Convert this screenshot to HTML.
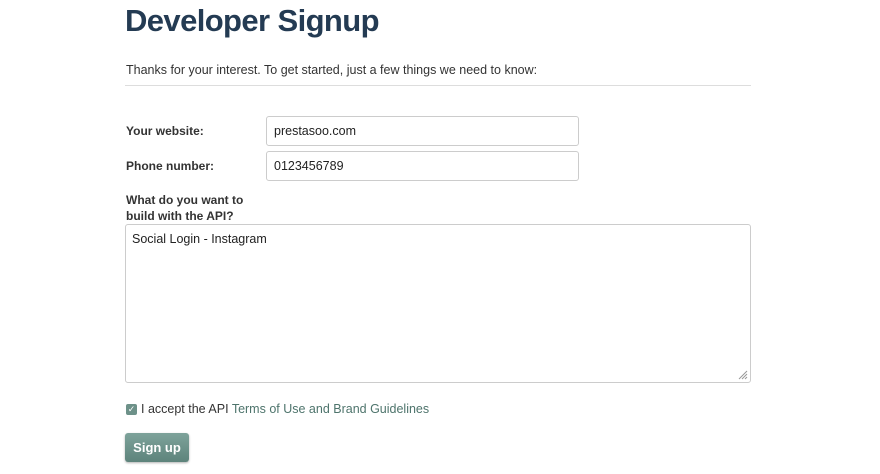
<!DOCTYPE html>
<html><head><style>
body{margin:0;width:880px;height:474px;background:#fff;font-family:"Liberation Sans",sans-serif;color:#222;position:relative;overflow:hidden}
.a{position:absolute}
h1{position:absolute;left:125px;top:3px;margin:0;font-size:31px;font-weight:bold;color:#243b53;letter-spacing:-0.6px}
.p{left:126px;top:63px;font-size:12.5px;color:#333}
.hr{left:125px;top:85px;width:626px;height:1px;background:#ddd}
.l{font-size:12px;font-weight:bold;color:#333}
.in{border:1px solid #ccc;border-radius:3px;background:#fff;font-size:12.5px;color:#222;box-sizing:border-box;padding:0 7px}
.btn{left:125px;top:433px;width:64px;height:29px;background:linear-gradient(#7ea39b,#5d837b);border-radius:3px;color:#fff;font-weight:bold;font-size:13px;text-align:center;line-height:29px;box-shadow:0 1px 2px rgba(0,0,0,.3)}
</style></head><body>
<h1>Developer Signup</h1>
<div class="a p">Thanks for your interest. To get started, just a few things we need to know:</div>
<div class="a hr"></div>
<div class="a l" style="left:126px;top:124px">Your website:</div>
<div class="a in" style="left:266px;top:116px;width:313px;height:30px;line-height:28px">prestasoo.com</div>
<div class="a l" style="left:126px;top:159px">Phone number:</div>
<div class="a in" style="left:266px;top:151px;width:313px;height:30px;line-height:28px">0123456789</div>
<div class="a l" style="left:126px;top:192px;line-height:16px">What do you want to<br>build with the API?</div>
<div class="a in" style="left:125px;top:224px;width:626px;height:159px;padding:7px 6px">Social Login - Instagram</div>
<svg class="a" style="left:738px;top:370px" width="10" height="10"><path d="M1 9L9 1M4 9L9 4M7 9L9 7" stroke="#999" stroke-width="1"/></svg>
<div class="a" style="left:126px;top:404px;width:11px;height:11px;background:#6d9189;border-radius:2px;color:#fff;font-size:9px;line-height:11px;text-align:center">✓</div>
<div class="a" style="left:141px;top:402px;font-size:12.5px;color:#333">I accept the API <span style="color:#4e746c">Terms of Use and Brand Guidelines</span></div>
<div class="a btn">Sign up</div>
</body></html>
